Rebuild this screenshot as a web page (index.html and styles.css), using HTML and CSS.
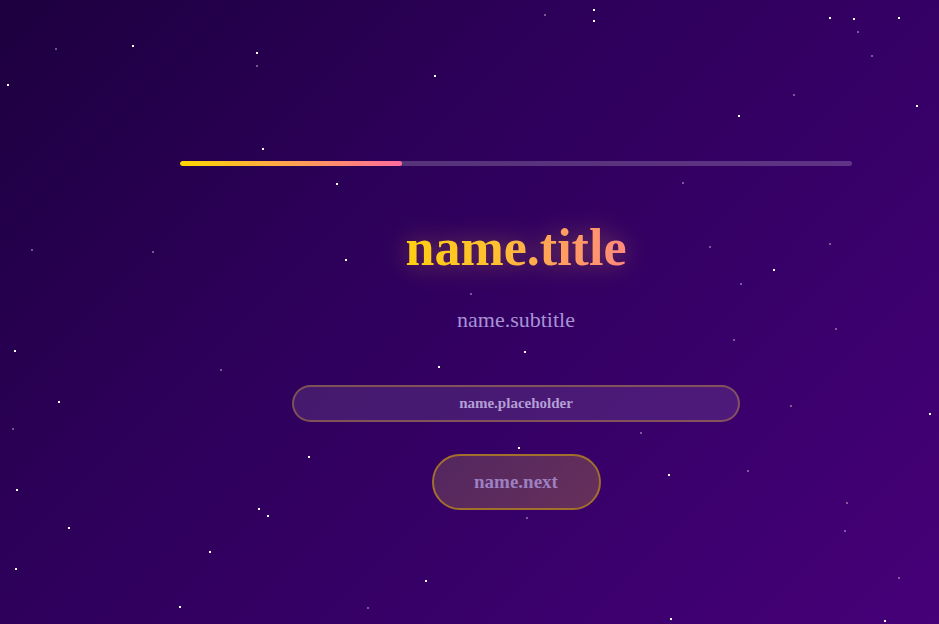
FILE: index.html
```html
<!DOCTYPE html>
<html>
<head>
<meta charset="utf-8">
<link rel="stylesheet" href="styles.css">
</head>
<body>
<div class="sky" id="sky"></div>
<main class="screen">
  <div class="progress"><div class="progress-fill" style="width:33%"></div></div>
  <h1 class="title">name.title</h1>
  <p class="subtitle">name.subtitle</p>
  <input class="name-input" type="text" placeholder="name.placeholder">
  <button class="next-btn" disabled>name.next</button>
</main>
<script src="stars.js"></script>
</body>
</html>
```
FILE: styles.css
```css
html, body {
  margin: 0;
  padding: 0;
  height: 100%;
}
body {
  background: linear-gradient(135deg, #1d003f 0%, #2c0058 35%, #370068 65%, #460078 100%);
  font-family: "Liberation Serif", serif;
  overflow: hidden;
  position: relative;
}
.sky {
  position: absolute;
  inset: 0;
  pointer-events: none;
}
.star {
  position: absolute;
  width: 2px;
  height: 2px;
  background: #ffffff;
}
.star.dim {
  opacity: 0.35;
}
.screen {
  position: relative;
  width: 672px;
  margin-left: 180px;
  padding-top: 161px;
  display: flex;
  flex-direction: column;
  align-items: center;
}
.progress {
  width: 100%;
  height: 5px;
  border-radius: 3px;
  background: rgba(255, 255, 255, 0.2);
  overflow: hidden;
}
.progress-fill {
  height: 100%;
  border-radius: 3px;
  background: linear-gradient(90deg, #ffd700, #ff6b9d);
}
.title {
  margin: 52px 0 0;
  font-size: 52px;
  line-height: 60px;
  font-weight: 700;
  background: linear-gradient(90deg, #ffce12 0%, #ffc030 40%, #ff9f5e 70%, #ff8a7c 100%);
  -webkit-background-clip: text;
  background-clip: text;
  color: transparent;
  filter: drop-shadow(0 0 12px rgba(255, 190, 60, 0.35));
}
.subtitle {
  margin: 28px 0 0;
  font-size: 22px;
  line-height: 28px;
  color: #a892d6;
}
.name-input {
  margin-top: 51px;
  width: 448px;
  height: 37px;
  box-sizing: border-box;
  border: 2px solid rgba(200, 150, 60, 0.45);
  border-radius: 19px;
  background: rgba(255, 255, 255, 0.1);
  text-align: center;
  font-family: "Liberation Serif", serif;
  font-weight: 700;
  font-size: 15px;
  color: #e0d4f5;
  outline: none;
}
.name-input::placeholder {
  color: #b39fd6;
}
.next-btn {
  margin-top: 32px;
  width: 169px;
  height: 56px;
  box-sizing: border-box;
  border: 2px solid #a26f2c;
  border-radius: 28px;
  background: linear-gradient(135deg, #532660 0%, #66305a 100%);
  font-family: "Liberation Serif", serif;
  font-weight: 700;
  font-size: 19px;
  color: #9c80c2;
}
```
FILE: stars.js
```js
var stars = [
  [7,84,0],[55,48,1],[132,45,0],[256,52,0],[256,65,1],[262,148,0],[434,75,0],[544,14,1],[593,9,0],[593,20,0],
  [829,17,0],[853,18,0],[898,17,0],[857,31,1],[871,55,1],[793,94,1],[738,115,0],[916,105,0],[682,182,1],[336,183,0],
  [31,249,1],[152,251,1],[345,259,0],[709,246,1],[829,243,1],[773,269,0],[740,283,1],[470,293,1],[835,328,1],[524,351,0],
  [14,350,0],[733,339,1],[438,366,0],[220,369,1],[58,401,0],[790,405,1],[929,413,0],[12,428,1],[640,432,1],[518,447,0],
  [308,456,0],[668,474,0],[747,470,1],[16,489,0],[258,508,0],[267,515,0],[846,502,1],[526,517,1],[68,527,0],[844,530,1],
  [209,551,0],[15,568,0],[425,580,0],[898,577,1],[179,606,0],[367,607,1],[670,618,0],[884,620,0]
];
var sky = document.getElementById('sky');
stars.forEach(function (s) {
  var d = document.createElement('div');
  d.className = 'star' + (s[2] ? ' dim' : '');
  d.style.left = s[0] + 'px';
  d.style.top = s[1] + 'px';
  sky.appendChild(d);
});
```
